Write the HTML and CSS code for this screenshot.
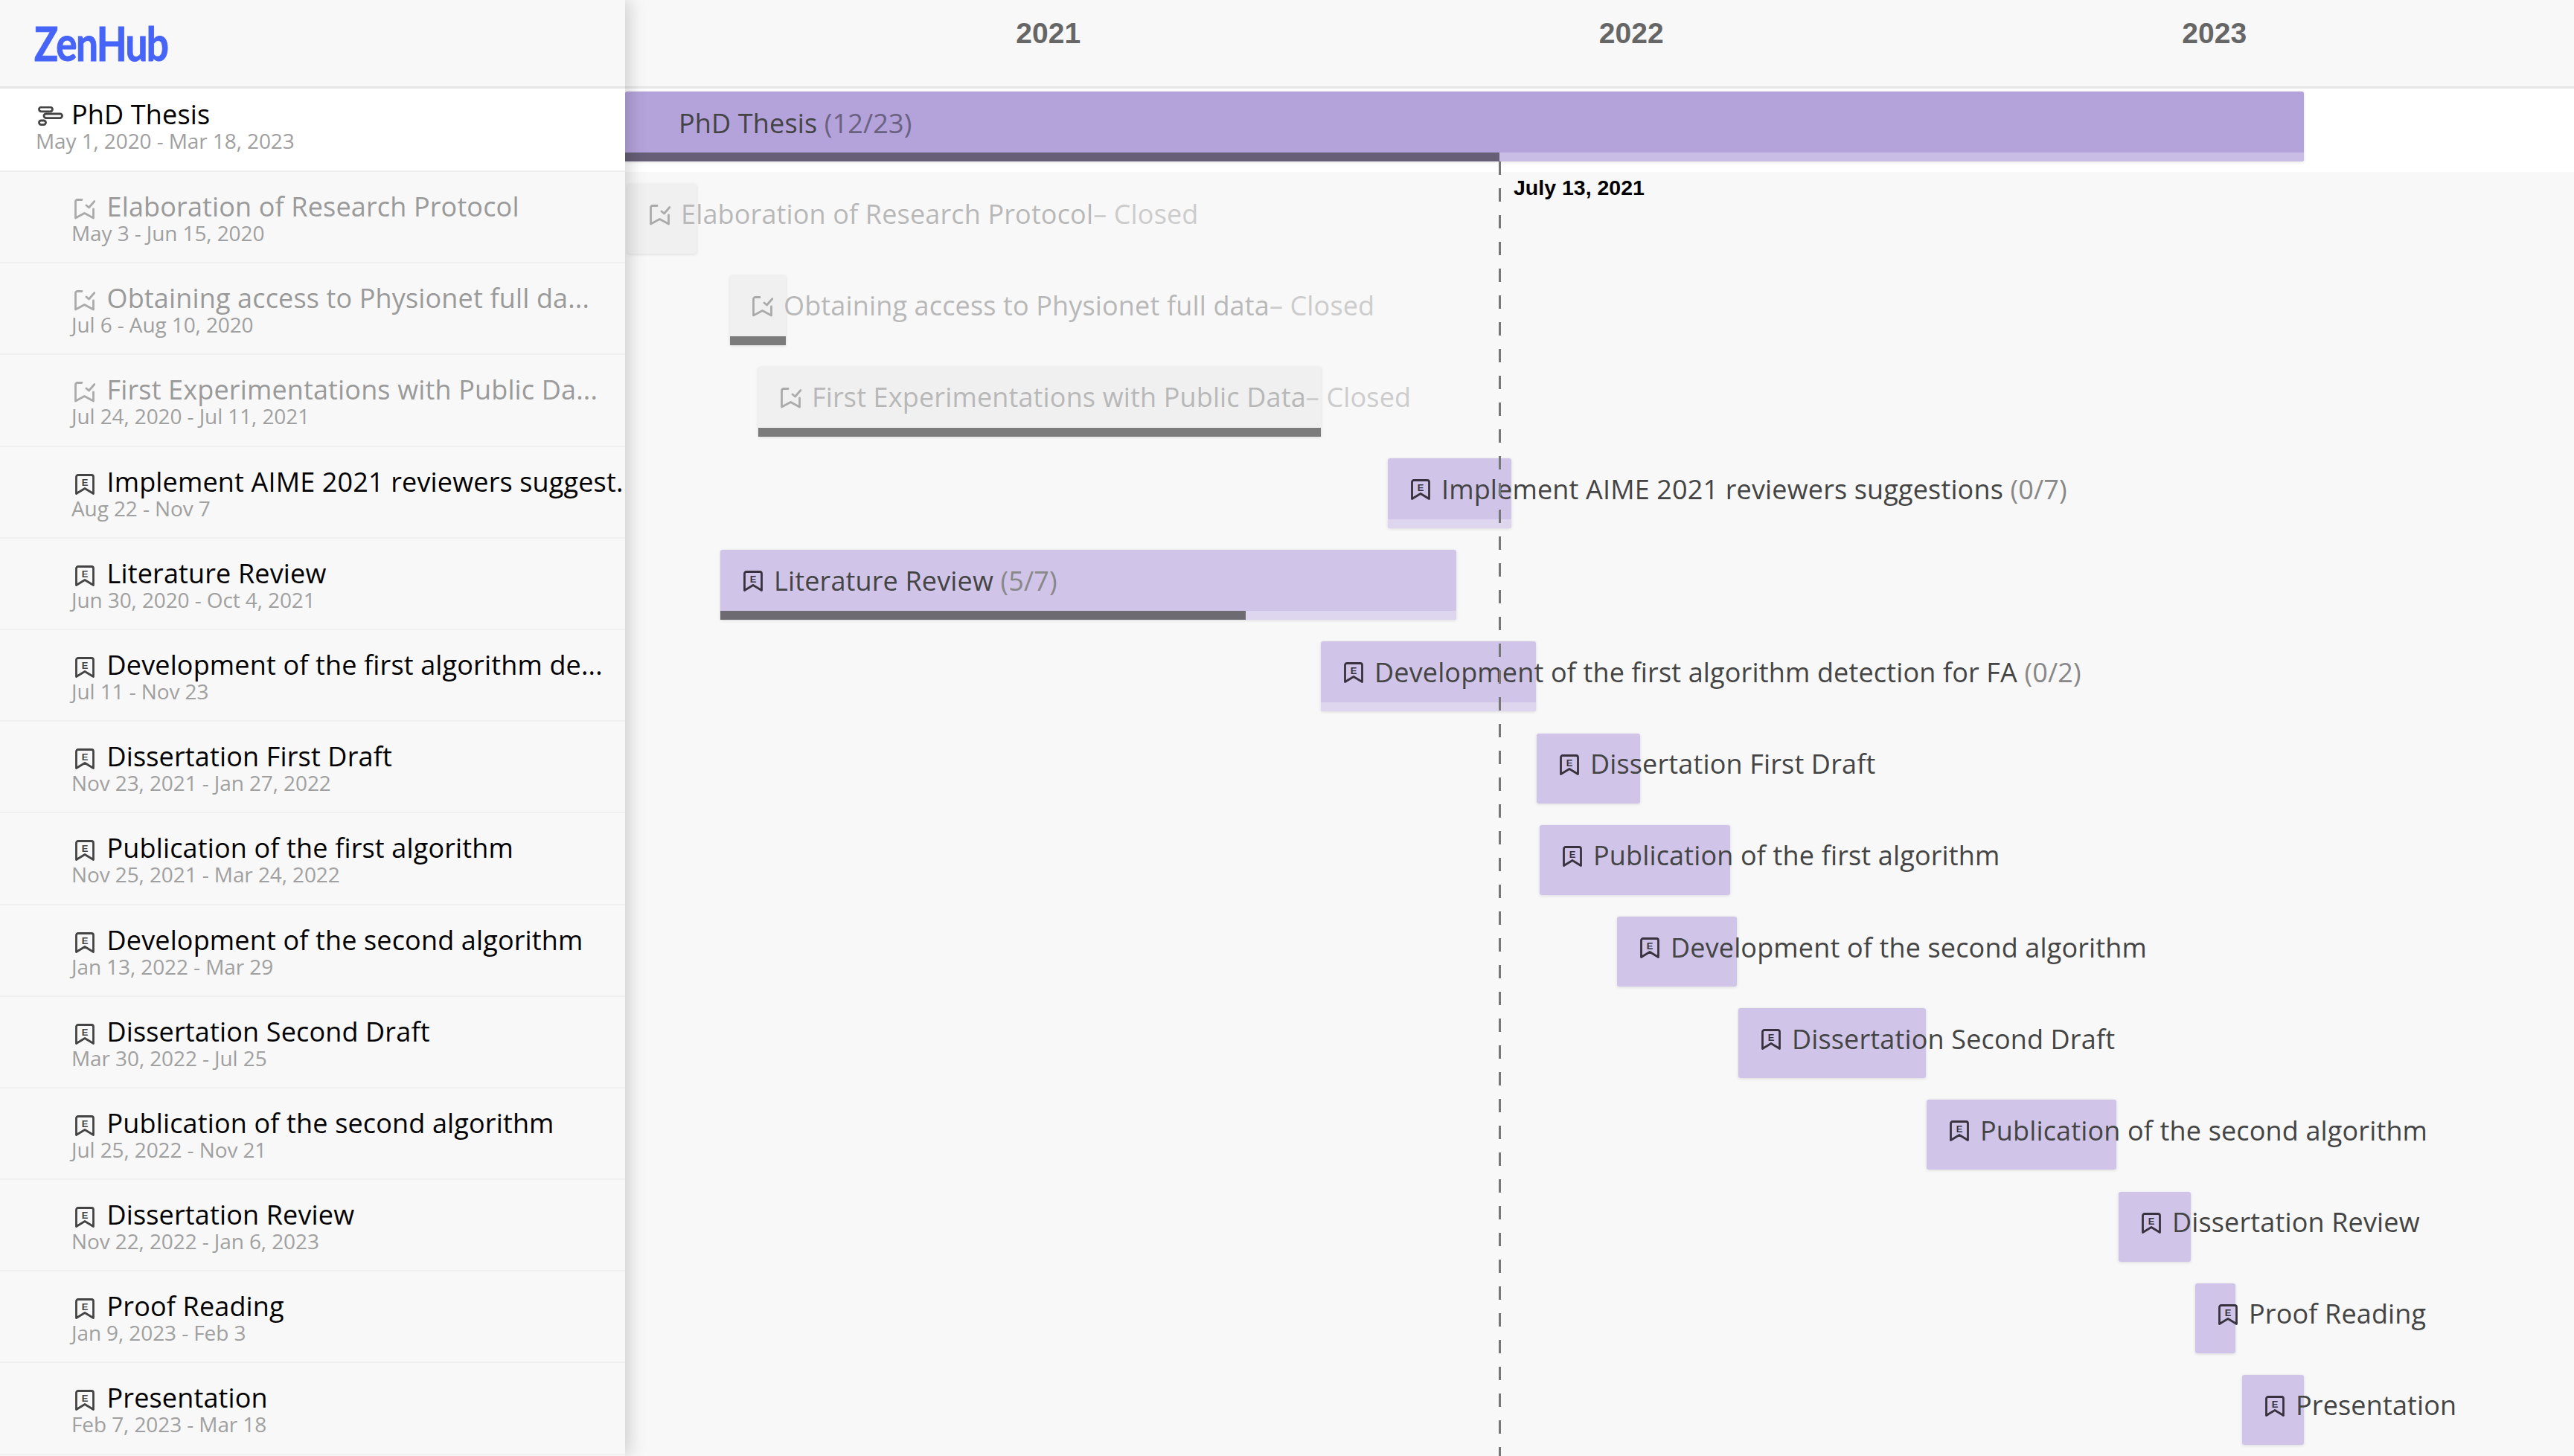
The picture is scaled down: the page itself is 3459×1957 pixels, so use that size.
FILE: index.html
```html
<!DOCTYPE html>
<html lang="en">
<head>
    <meta charset="UTF-8">
    <title>ZenHub Roadmap</title>
    <link rel="stylesheet" href="styles.css">
</head>
<body>

    <svg class="icon-defs" width="0" height="0">
        <symbol id="i-epic" viewBox="0 0 34 26">
            <rect x="1.5" y="1.2" width="18" height="5.6" rx="2.8" />
            <rect x="8" y="10" width="24.5" height="5.6" rx="2.8" />
            <rect x="1.5" y="19" width="9" height="5.6" rx="2.8" />
        </symbol>
        <symbol id="i-issue" viewBox="0 0 28 28">
            <path d="M5 1.5h18a2.5 2.5 0 0 1 2.5 2.5v22.5L14 19.5 2.5 26.5V4A2.5 2.5 0 0 1 5 1.5z" />
        </symbol>
        <symbol id="i-closed" viewBox="0 0 28 28">
            <path d="M10 1.5H4A2.5 2.5 0 0 0 1.5 4v22L13.5 19.5 25.5 26V14" />
            <path d="M16 9l3.5 3L27 3.5" />
        </symbol>
    </svg>

    <div class="page">
        <aside class="sidebar">
            <div class="logo-bar"><span class="logo">ZenHub</span></div>

            <div class="item item-epic">
                <div class="item-title"><svg class="icon icon-gantt"><use href="#i-epic"></use></svg>PhD Thesis</div>
                <div class="item-date">May 1, 2020 - Mar 18, 2023</div>
            </div>
            <div class="item item-closed">
                <div class="item-title"><svg class="icon"><use href="#i-closed"></use></svg>Elaboration of Research Protocol</div>
                <div class="item-date">May 3 - Jun 15, 2020</div>
            </div>
            <div class="item item-closed">
                <div class="item-title"><svg class="icon"><use href="#i-closed"></use></svg>Obtaining access to Physionet full da...</div>
                <div class="item-date">Jul 6 - Aug 10, 2020</div>
            </div>
            <div class="item item-closed">
                <div class="item-title"><svg class="icon"><use href="#i-closed"></use></svg>First Experimentations with Public Da...</div>
                <div class="item-date">Jul 24, 2020 - Jul 11, 2021</div>
            </div>
            <div class="item">
                <div class="item-title"><svg class="icon" viewBox="0 0 28 28"><use href="#i-issue"></use><text x="14" y="15.5" class="icon-letter">E</text></svg>Implement AIME 2021 reviewers suggest...</div>
                <div class="item-date">Aug 22 - Nov 7</div>
            </div>
            <div class="item">
                <div class="item-title"><svg class="icon" viewBox="0 0 28 28"><use href="#i-issue"></use><text x="14" y="15.5" class="icon-letter">E</text></svg>Literature Review</div>
                <div class="item-date">Jun 30, 2020 - Oct 4, 2021</div>
            </div>
            <div class="item">
                <div class="item-title"><svg class="icon" viewBox="0 0 28 28"><use href="#i-issue"></use><text x="14" y="15.5" class="icon-letter">E</text></svg>Development of the first algorithm de...</div>
                <div class="item-date">Jul 11 - Nov 23</div>
            </div>
            <div class="item">
                <div class="item-title"><svg class="icon" viewBox="0 0 28 28"><use href="#i-issue"></use><text x="14" y="15.5" class="icon-letter">E</text></svg>Dissertation First Draft</div>
                <div class="item-date">Nov 23, 2021 - Jan 27, 2022</div>
            </div>
            <div class="item">
                <div class="item-title"><svg class="icon" viewBox="0 0 28 28"><use href="#i-issue"></use><text x="14" y="15.5" class="icon-letter">E</text></svg>Publication of the first algorithm</div>
                <div class="item-date">Nov 25, 2021 - Mar 24, 2022</div>
            </div>
            <div class="item">
                <div class="item-title"><svg class="icon" viewBox="0 0 28 28"><use href="#i-issue"></use><text x="14" y="15.5" class="icon-letter">E</text></svg>Development of the second algorithm</div>
                <div class="item-date">Jan 13, 2022 - Mar 29</div>
            </div>
            <div class="item">
                <div class="item-title"><svg class="icon" viewBox="0 0 28 28"><use href="#i-issue"></use><text x="14" y="15.5" class="icon-letter">E</text></svg>Dissertation Second Draft</div>
                <div class="item-date">Mar 30, 2022 - Jul 25</div>
            </div>
            <div class="item">
                <div class="item-title"><svg class="icon" viewBox="0 0 28 28"><use href="#i-issue"></use><text x="14" y="15.5" class="icon-letter">E</text></svg>Publication of the second algorithm</div>
                <div class="item-date">Jul 25, 2022 - Nov 21</div>
            </div>
            <div class="item">
                <div class="item-title"><svg class="icon" viewBox="0 0 28 28"><use href="#i-issue"></use><text x="14" y="15.5" class="icon-letter">E</text></svg>Dissertation Review</div>
                <div class="item-date">Nov 22, 2022 - Jan 6, 2023</div>
            </div>
            <div class="item">
                <div class="item-title"><svg class="icon" viewBox="0 0 28 28"><use href="#i-issue"></use><text x="14" y="15.5" class="icon-letter">E</text></svg>Proof Reading</div>
                <div class="item-date">Jan 9, 2023 - Feb 3</div>
            </div>
            <div class="item">
                <div class="item-title"><svg class="icon" viewBox="0 0 28 28"><use href="#i-issue"></use><text x="14" y="15.5" class="icon-letter">E</text></svg>Presentation</div>
                <div class="item-date">Feb 7, 2023 - Mar 18</div>
            </div>
        </aside>

        <section class="timeline">
            <div class="years">
                <span class="year">2021</span>
                <span class="year">2022</span>
                <span class="year">2023</span>
            </div>

            <div class="lane lane-epic">
                <div class="bar bar-epic" style="margin-left: 0; width: 2256px">
                    <div class="bar-main"><span class="bar-label">PhD Thesis <span class="bar-count">(12/23)</span></span></div>
                    <div class="bar-strip"><div class="bar-fill" style="width: 52.1%"></div></div>
                </div>
            </div>

            <div class="lane">
                <div class="bar bar-closed" style="margin-left: 3px; width: 93px">
                    <div class="bar-main"><svg class="icon"><use href="#i-closed"></use></svg><span class="bar-label">Elaboration of Research Protocol<span class="bar-count">– Closed</span></span></div>
                </div>
            </div>
            <div class="lane">
                <div class="bar bar-closed" style="margin-left: 141px; width: 75px">
                    <div class="bar-main"><svg class="icon"><use href="#i-closed"></use></svg><span class="bar-label">Obtaining access to Physionet full data<span class="bar-count">– Closed</span></span></div>
                    <div class="bar-strip"><div class="bar-fill" style="width: 100%"></div></div>
                </div>
            </div>
            <div class="lane">
                <div class="bar bar-closed" style="margin-left: 179px; width: 756px">
                    <div class="bar-main"><svg class="icon"><use href="#i-closed"></use></svg><span class="bar-label">First Experimentations with Public Data<span class="bar-count">– Closed</span></span></div>
                    <div class="bar-strip"><div class="bar-fill" style="width: 100%"></div></div>
                </div>
            </div>
            <div class="lane">
                <div class="bar" style="margin-left: 1025px; width: 166px">
                    <div class="bar-main"><svg class="icon" viewBox="0 0 28 28"><use href="#i-issue"></use><text x="14" y="15.5" class="icon-letter">E</text></svg><span class="bar-label">Implement AIME 2021 reviewers suggestions <span class="bar-count">(0/7)</span></span></div>
                    <div class="bar-strip"></div>
                </div>
            </div>
            <div class="lane">
                <div class="bar" style="margin-left: 128px; width: 989px">
                    <div class="bar-main"><svg class="icon" viewBox="0 0 28 28"><use href="#i-issue"></use><text x="14" y="15.5" class="icon-letter">E</text></svg><span class="bar-label">Literature Review <span class="bar-count">(5/7)</span></span></div>
                    <div class="bar-strip"><div class="bar-fill" style="width: 71.4%"></div></div>
                </div>
            </div>
            <div class="lane">
                <div class="bar" style="margin-left: 935px; width: 289px">
                    <div class="bar-main"><svg class="icon" viewBox="0 0 28 28"><use href="#i-issue"></use><text x="14" y="15.5" class="icon-letter">E</text></svg><span class="bar-label">Development of the first algorithm detection for FA <span class="bar-count">(0/2)</span></span></div>
                    <div class="bar-strip"></div>
                </div>
            </div>
            <div class="lane">
                <div class="bar" style="margin-left: 1225px; width: 139px">
                    <div class="bar-main"><svg class="icon" viewBox="0 0 28 28"><use href="#i-issue"></use><text x="14" y="15.5" class="icon-letter">E</text></svg><span class="bar-label">Dissertation First Draft</span></div>
                </div>
            </div>
            <div class="lane">
                <div class="bar" style="margin-left: 1229px; width: 256px">
                    <div class="bar-main"><svg class="icon" viewBox="0 0 28 28"><use href="#i-issue"></use><text x="14" y="15.5" class="icon-letter">E</text></svg><span class="bar-label">Publication of the first algorithm</span></div>
                </div>
            </div>
            <div class="lane">
                <div class="bar" style="margin-left: 1333px; width: 161px">
                    <div class="bar-main"><svg class="icon" viewBox="0 0 28 28"><use href="#i-issue"></use><text x="14" y="15.5" class="icon-letter">E</text></svg><span class="bar-label">Development of the second algorithm</span></div>
                </div>
            </div>
            <div class="lane">
                <div class="bar" style="margin-left: 1496px; width: 252px">
                    <div class="bar-main"><svg class="icon" viewBox="0 0 28 28"><use href="#i-issue"></use><text x="14" y="15.5" class="icon-letter">E</text></svg><span class="bar-label">Dissertation Second Draft</span></div>
                </div>
            </div>
            <div class="lane">
                <div class="bar" style="margin-left: 1749px; width: 255px">
                    <div class="bar-main"><svg class="icon" viewBox="0 0 28 28"><use href="#i-issue"></use><text x="14" y="15.5" class="icon-letter">E</text></svg><span class="bar-label">Publication of the second algorithm</span></div>
                </div>
            </div>
            <div class="lane">
                <div class="bar" style="margin-left: 2007px; width: 97px">
                    <div class="bar-main"><svg class="icon" viewBox="0 0 28 28"><use href="#i-issue"></use><text x="14" y="15.5" class="icon-letter">E</text></svg><span class="bar-label">Dissertation Review</span></div>
                </div>
            </div>
            <div class="lane">
                <div class="bar" style="margin-left: 2110px; width: 54px">
                    <div class="bar-main"><svg class="icon" viewBox="0 0 28 28"><use href="#i-issue"></use><text x="14" y="15.5" class="icon-letter">E</text></svg><span class="bar-label">Proof Reading</span></div>
                </div>
            </div>
            <div class="lane">
                <div class="bar" style="margin-left: 2173px; width: 83px">
                    <div class="bar-main"><svg class="icon" viewBox="0 0 28 28"><use href="#i-issue"></use><text x="14" y="15.5" class="icon-letter">E</text></svg><span class="bar-label">Presentation</span></div>
                </div>
            </div>

            <!-- marca de hoje, fica por cima das barras -->
            <div class="today-line"></div>
            <div class="today-label">July 13, 2021</div>
        </section>
    </div>

</body>
</html>
```

FILE: styles.css
```css
body {
    margin: 0;
    padding: 0;
    font-family: "Open Sans", "Noto Sans", sans-serif;
    background-color: #f8f8f8;
    color: #000;
}

.icon-defs {
    position: absolute;
}

.page {
    display: flex;
    height: 1957px;
    overflow: hidden;
}

/* Coluna da esquerda */
.sidebar {
    width: 840px;
    flex-shrink: 0;
    background-color: #f8f8f8;
    box-shadow: 6px 0 22px rgba(0, 0, 0, 0.16);
    position: relative;
    z-index: 10;
}

.logo-bar {
    height: 114px;
    padding-bottom: 2px;
    border-bottom: 3px solid #e6e6e6;
    padding-left: 46px;
    display: flex;
    align-items: center;
}

.logo {
    font-family: Lato, sans-serif;
    font-size: 64px;
    font-weight: 700;
    letter-spacing: -2px;
    color: #4664f8;
    -webkit-text-stroke: 1px #4664f8;
    transform: scaleX(0.83);
    transform-origin: left center;
}

.item {
    height: 123.2px;
    box-sizing: border-box;
    border-bottom: 2px solid #f0f0f0;
    padding: 27px 0 0 96px;
    white-space: nowrap;
    overflow: hidden;
}

.item-epic {
    height: 112px;
    background-color: #fff;
    padding: 15px 0 0 48px;
}

.item-title {
    display: flex;
    align-items: center;
    font-size: 36px;
    line-height: 40px;
    letter-spacing: 0.15px;
}

.item-date {
    font-size: 28px;
    line-height: 30px;
    letter-spacing: -0.1px;
    color: #a0a0a0;
}

.item-closed .item-title {
    color: #9a9a9a;
}

.icon {
    width: 28px;
    height: 28px;
    flex-shrink: 0;
    margin: 6px 15.5px 0 4px;
    fill: none;
    stroke: #444;
    stroke-width: 2.8;
    stroke-linejoin: round;
    stroke-linecap: round;
}

.icon-gantt {
    width: 34px;
    height: 26px;
    margin: 4px 11px 0 3px;
}

.icon-letter {
    font-family: "Liberation Sans", sans-serif;
    font-size: 13px;
    font-weight: 700;
    letter-spacing: 0;
    text-anchor: middle;
    fill: #444;
    stroke: none;
}

.item-closed .icon {
    stroke: #aaa;
}

/* Coluna do grafico */
.timeline {
    flex: 1;
    position: relative;
}

.years {
    height: 116px;
    border-bottom: 3px solid #e6e6e6;
    padding-left: 177px;
    display: flex;
}

.year {
    width: 783.5px;
    text-align: center;
    font-family: "Liberation Sans", sans-serif;
    font-size: 39px;
    font-weight: 700;
    line-height: 90px;
    color: #666;
}

.lane {
    height: 123.2px;
    box-sizing: border-box;
    padding-top: 15.5px;
}

.lane-epic {
    height: 112px;
    padding-top: 3.7px;
    background-color: #fff;
}

.bar {
    height: 94px;
    background-color: #d0c5e8;
    border-radius: 3px;
    box-shadow: 0 1px 4px rgba(0, 0, 0, 0.12);
}

.bar-main {
    height: 82px;
    display: flex;
    align-items: center;
    padding-left: 30px;
    white-space: nowrap;
}

.bar-main .icon {
    stroke: #38323f;
    margin: 2px 14px 0 0;
}

.bar-main .icon-letter {
    fill: #38323f;
}

.bar-label {
    font-size: 36px;
    letter-spacing: 0.15px;
    color: #444;
}

.bar-count {
    color: #888;
}

.bar-strip {
    height: 12px;
    background-color: #ded5ee;
    border-radius: 0 0 3px 3px;
}

.bar-fill {
    height: 100%;
    background-color: #6e6a72;
}

.bar-epic {
    background-color: #b4a2da;
}

.bar-epic .bar-main {
    padding-left: 72px;
}

.bar-epic .bar-label {
    position: relative;
    top: 2px;
}

.bar-epic .bar-count {
    color: #6b6180;
}

.bar-epic .bar-strip {
    background-color: #c9bce5;
}

.bar-epic .bar-fill {
    background-color: #665f75;
}

.bar-closed {
    background-color: #f0f0f0;
}

.bar-closed .icon {
    stroke: #aaa;
}

.bar-closed .bar-label {
    color: #b8b8b8;
}

.bar-closed .bar-count {
    color: #ccc;
}

.bar-closed .bar-fill {
    background-color: #7b7b7b;
}

.today-line {
    position: absolute;
    left: 1174px;
    top: 217px;
    bottom: 0;
    width: 3px;
    background-image: repeating-linear-gradient(#777 0, #777 18px, transparent 18px, transparent 36px);
}

.today-label {
    position: absolute;
    left: 1194px;
    top: 235px;
    font-family: "Liberation Sans", sans-serif;
    font-size: 28.5px;
    font-weight: 700;
    line-height: 34px;
    color: #000;
}
```
